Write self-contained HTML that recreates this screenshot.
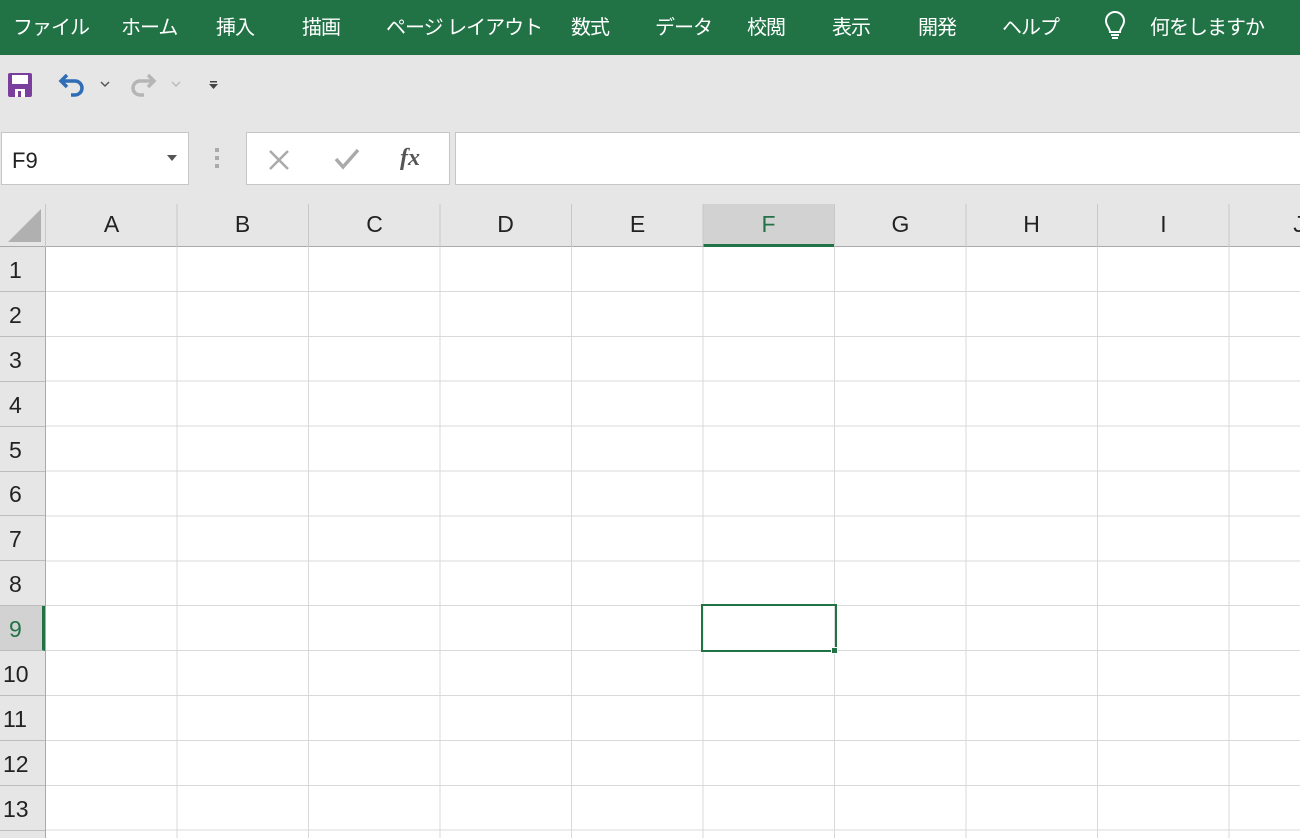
<!DOCTYPE html>
<html><head><meta charset="utf-8"><style>
*{margin:0;padding:0;box-sizing:border-box}
body{width:1300px;height:838px;overflow:hidden;background:#e6e6e6;font-family:"Liberation Sans","Noto Sans CJK JP",sans-serif;position:relative}
.a{position:absolute}
#top{left:0;top:0;width:1300px;height:55px;background:#217346;color:#fff;font-size:20px}
#top span{position:absolute;top:11px;white-space:nowrap;letter-spacing:-1px}
.box{background:#fff;border:1px solid #c6c6c6}
#grid{left:46px;top:247px;width:1254px;height:591px;background-color:#fff;
background-image:repeating-linear-gradient(90deg,transparent 0 130.5px,#d9d9d9 130.5px 131.5px),repeating-linear-gradient(180deg,transparent 0 43.9px,#d9d9d9 43.9px 44.9px)}
.ch{position:absolute;top:211px;font-size:23px;color:#222;width:131px;text-align:center}
.rh{position:absolute;left:0;width:45px;height:45px;border-bottom:1px solid #bdbdbd;font-size:23px;color:#222;padding:10px 0 0 9px}
</style></head><body>
<div id="top" class="a">
<span style="left:13px">ファイル</span><span style="left:121px">ホーム</span><span style="left:216px">挿入</span><span style="left:302px">描画</span><span style="left:386px">ページ レイアウト</span><span style="left:571px">数式</span><span style="left:655px">データ</span><span style="left:747px">校閲</span><span style="left:832px">表示</span><span style="left:918px">開発</span><span style="left:1002px">ヘルプ</span>
<svg class="a" style="left:1103px;top:11px" width="24" height="32" viewBox="0 0 24 32" fill="none" stroke="#fff" stroke-width="2"><path d="M7 21c0-4-4-6-4-11a9 9 0 0 1 18 0c0 5-4 7-4 11z"/><path d="M8 24h8M9 27h6"/></svg>
<span style="left:1150px">何をしますか</span>
</div>
<svg class="a" style="left:7px;top:72px" width="26" height="26" viewBox="0 0 26 26"><rect x="1" y="1" width="24" height="24" rx="2" fill="#7a3f9d"/><rect x="5" y="3" width="16" height="9" fill="#fff"/><rect x="8" y="17" width="10" height="8" fill="#fff"/><rect x="11" y="19" width="3" height="6" fill="#7a3f9d"/></svg>
<svg class="a" style="left:57px;top:73px" width="30" height="26" viewBox="0 0 30 26" fill="none" stroke="#2f6db5" stroke-width="3.5"><path d="M4 8h14a7 7 0 0 1 0 14h-4"/><path d="M10 2L4 8l6 6"/></svg>
<svg class="a" style="left:99px;top:80px" width="12" height="8" fill="none" stroke="#555" stroke-width="1.5"><path d="M2 2l4 4 4-4"/></svg>
<svg class="a" style="left:128px;top:73px" width="30" height="26" viewBox="0 0 30 26" fill="none" stroke="#b5b5b5" stroke-width="3.5"><path d="M26 8H12a7 7 0 0 0 0 14h4"/><path d="M20 2l6 6-6 6"/></svg>
<svg class="a" style="left:170px;top:80px" width="12" height="8" fill="none" stroke="#bbb" stroke-width="1.5"><path d="M2 2l4 4 4-4"/></svg>
<svg class="a" style="left:208px;top:80px" width="12" height="12"><rect x="2" y="1" width="7" height="1.5" fill="#444"/><path d="M1 4h9l-4.5 5z" fill="#444"/></svg>
<div class="a box" style="left:1px;top:132px;width:188px;height:53px;font-size:22px;color:#222;padding:15px 0 0 10px">F9</div>
<svg class="a" style="left:166px;top:154px" width="12" height="8"><path d="M1 1h10l-5 6z" fill="#555"/></svg>
<div class="a" style="left:215px;top:148px;width:4px;height:4px;background:#aaa;box-shadow:0 8px #aaa,0 16px #aaa"></div>
<div class="a box" style="left:246px;top:132px;width:204px;height:53px"></div>
<svg class="a" style="left:267px;top:148px" width="24" height="24" fill="none" stroke="#aaa" stroke-width="2.5"><path d="M3 3l18 18M21 3L3 21"/></svg>
<svg class="a" style="left:333px;top:146px" width="28" height="26" fill="none" stroke="#aaa" stroke-width="3.5"><path d="M3 13l7 8L25 4"/></svg>
<div class="a" style="left:400px;top:145px;font-family:'Liberation Serif',serif;font-style:italic;font-weight:bold;font-size:24px;color:#555">fx</div>
<div class="a box" style="left:455px;top:132px;width:850px;height:53px"></div>
<div class="a" style="left:0;top:204px;width:1300px;height:43px;background:#e6e6e6;border-bottom:1px solid #aaa"></div>
<svg class="a" style="left:7px;top:208px" width="35" height="35"><path d="M34 1V34H1z" fill="#b0b0b0"/></svg>
<div class="a" style="left:703px;top:204px;width:132px;height:43px;background:#d2d2d2;border-bottom:3px solid #217346"></div>
<div class="a" style="left:45px;top:204px;width:1255px;height:43px;background-image:repeating-linear-gradient(90deg,#c8c8c8 0 1px,transparent 1px 131.5px)"></div>
<div class="ch" style="left:46px">A</div><div class="ch" style="left:177px">B</div><div class="ch" style="left:309px">C</div><div class="ch" style="left:440px">D</div><div class="ch" style="left:572px">E</div><div class="ch" style="left:703px;color:#217346">F</div><div class="ch" style="left:835px">G</div><div class="ch" style="left:966px">H</div><div class="ch" style="left:1098px">I</div><div class="ch" style="left:1229px;width:140px">J</div>
<div id="grid" class="a"></div>
<div class="a" style="left:45px;top:247px;width:1px;height:591px;background:#aaa"></div>
<div class="rh" style="top:247px">1</div><div class="rh" style="top:292px">2</div><div class="rh" style="top:337px">3</div><div class="rh" style="top:382px">4</div><div class="rh" style="top:427px">5</div><div class="rh" style="top:471px">6</div><div class="rh" style="top:516px">7</div><div class="rh" style="top:561px">8</div><div class="rh" style="top:606px;background:#d2d2d2;color:#217346;border-right:3px solid #217346">9</div><div class="rh" style="top:651px;padding-left:3px">10</div><div class="rh" style="top:696px;padding-left:3px">11</div><div class="rh" style="top:741px;padding-left:3px">12</div><div class="rh" style="top:786px;padding-left:3px">13</div>
<div class="a" style="left:701px;top:604px;width:136px;height:48px;border:2px solid #217346"></div>
<div class="a" style="left:831px;top:647px;width:7px;height:7px;background:#217346;border:1px solid #fff"></div>
</body></html>
